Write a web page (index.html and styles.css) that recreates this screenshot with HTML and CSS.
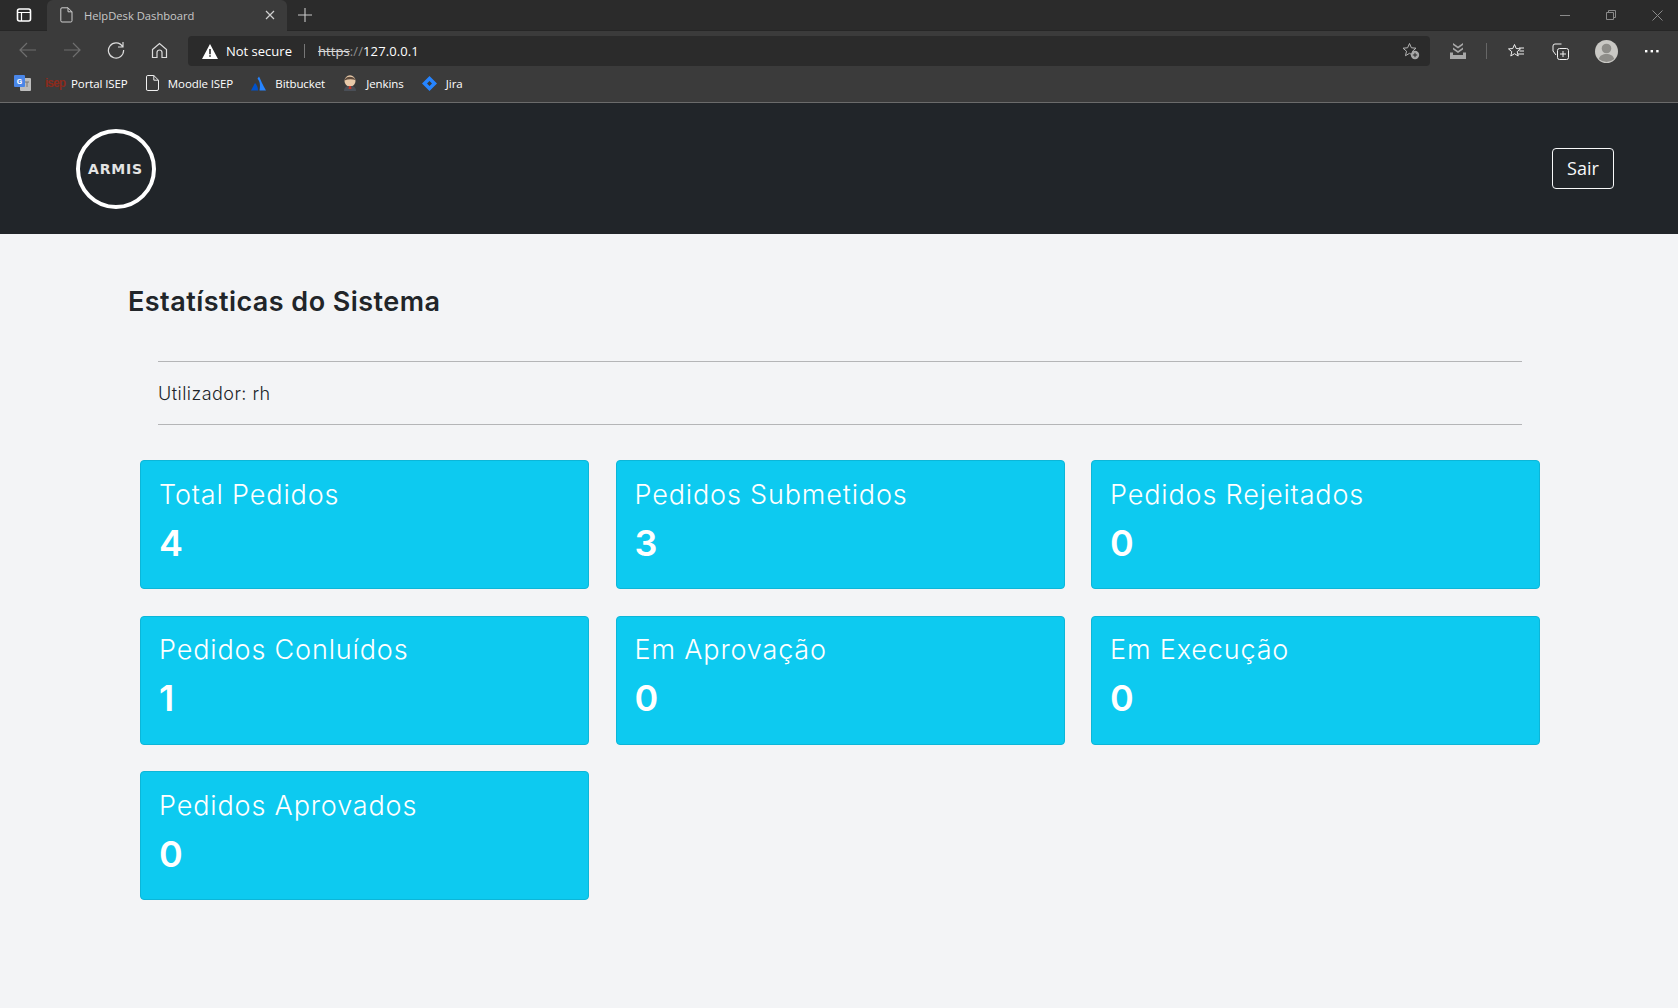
FILE: index.html
```html
<!DOCTYPE html>
<html lang="en">
<head>
    <meta charset="UTF-8">
    <title>HelpDesk Dashboard</title>
    <link rel="stylesheet" href="styles.css">
</head>
<body>
    <!-- Browser chrome -->
    <div class="browser">
        <div class="tabstrip">
            <div class="tab-menu">
                <svg width="16" height="16" viewBox="0 0 16 16" fill="none" stroke="#fff" stroke-width="1.6"><rect x="1.5" y="2" width="13" height="12" rx="2"/><path d="M5.5 5.5V14M1.5 5.5h13" stroke-width="1.2"/></svg>
            </div>
            <div class="tab">
                <svg width="14" height="16" viewBox="0 0 14 16" fill="none" stroke="#cfcfcf" stroke-width="1"><path d="M2 .8h6l4 4v9a1.2 1.2 0 0 1-1.2 1.2H2A1.2 1.2 0 0 1 .8 13.800V2A1.200 1.200 0 0 1 2 .8zM8 .8v4h4"/></svg>
                <span class="tab-title">HelpDesk Dashboard</span>
                <svg class="tab-close" width="10" height="10" viewBox="0 0 10 10" stroke="#d0d0d0" stroke-width="1.200"><path d="M1 1l8 8M9 1l-8 8"/></svg>
            </div>
            <svg class="new-tab" width="14" height="14" viewBox="0 0 14 14" stroke="#c8c8c8" stroke-width="1.100"><path d="M7 0v14M0 7h14"/></svg>
            <div class="window-controls">
                <svg width="10" height="10" viewBox="0 0 10 10" stroke="#8a8a8a"><path d="M0 5.500h10"/></svg>
                <svg width="10" height="10" viewBox="0 0 10 10" fill="none" stroke="#8a8a8a"><path d="M.5 2.500h7v7h-7zM2.500 2.500v-2h7v7h-2"/></svg>
                <svg width="11" height="11" viewBox="0 0 11 11" stroke="#8a8a8a"><path d="M.5.5l10 10M10.500.5l-10 10"/></svg>
            </div>
        </div>

        <div class="toolbar">
            <div class="nav-buttons">
                <svg width="18" height="16" viewBox="0 0 18 16" fill="none" stroke="#6f6f6f" stroke-width="1.200"><path d="M17 8H1M8 1L1 8l7 7"/></svg>
                <svg width="18" height="16" viewBox="0 0 18 16" fill="none" stroke="#6f6f6f" stroke-width="1.200"><path d="M1 8h16M10 1l7 7-7 7"/></svg>
                <svg width="18" height="18" viewBox="0 0 18 18" fill="none" stroke="#dcdcdc" stroke-width="1.200"><path d="M15.500 5.500A7.600 7.600 0 1 0 16.600 9M16 1v5h-5"/></svg>
                <svg width="17" height="17" viewBox="0 0 17 17" fill="none" stroke="#dcdcdc" stroke-width="1.200"><path d="M1.500 7.500L8.500 1.500l7 6V15.500h-4.500V10.500a2.500 2.500 0 0 0-5 0V15.500H1.500z"/></svg>
            </div>
            <div class="address">
                <svg width="16" height="15" viewBox="0 0 16 15"><path d="M8 0l8 15H0z" fill="#fff"/><path d="M7.200 5h1.600v5.200H7.200zM7.200 11.200h1.600v1.600H7.200z" fill="#2b2b2b"/></svg>
                <span class="not-secure">Not secure</span>
                <span class="addr-sep"></span>
                <span class="url"><s>https</s><i>://</i>127.0.0.1</span>
                <svg class="addr-star" width="18" height="18" viewBox="0 0 18 18"><path d="M7.500 1.500l1.900 4.300 4.600.4-3.500 3 1 4.500-4-2.400-4 2.400 1-4.500-3.500-3 4.600-.4z" fill="none" stroke="#b5b5b5"/><circle cx="13" cy="13" r="4.200" fill="#a8a8a8"/><path d="M13 10.800v4.400M10.800 13h4.400" stroke="#2b2b2b"/></svg>
            </div>
            <div class="tool-buttons">
                <svg class="tool-dl" width="16" height="16" viewBox="0 0 16 16" fill="#a8a8a8"><path d="M3 0l5 3.500L13 0v2L8 5.500 3 2zM3 4.500L8 8l5-3.500v2L8 10 3 6.500zM0 9.500h3V12h10V9.500h3V16H0z"/></svg>
                <span class="tool-sep"></span>
                <svg class="tool-fav" width="17" height="17" viewBox="0 0 17 17" fill="none" stroke="#f0f0f0"><path d="M6.500 1.500l1.700 4 4.300.4-3.300 2.800 1 4.300-3.700-2.300-3.700 2.300 1-4.300L.5 5.900l4.300-.4zM11 5h5M11.500 8h4.500M10 11h6"/></svg>
                <svg class="tool-col" width="17" height="17" viewBox="0 0 17 17" fill="none" stroke="#f0f0f0"><path d="M9.500 1H3a2 2 0 0 0-2 2v5l3 4"/><rect x="5.500" y="5.500" width="11" height="11" rx="2"/><path d="M11 8v6M8 11h6"/></svg>
                <svg class="tool-avatar" width="23" height="23" viewBox="0 0 23 23"><circle cx="11.500" cy="11.500" r="11.500" fill="#c9c8c4"/><circle cx="11.500" cy="8.500" r="4.800" fill="#8e8d89"/><path d="M3.800 19c1-3.600 4-5 7.700-5s6.700 1.400 7.700 5a11.500 11.500 0 0 1-15.400 0z" fill="#8e8d89"/></svg>
                <svg class="tool-more" width="14" height="4" viewBox="0 0 14 4" fill="#fff"><rect y="1" width="2.400" height="2.400"/><rect x="5.600" y="1" width="2.400" height="2.400"/><rect x="11.200" y="1" width="2.400" height="2.400"/></svg>
            </div>
        </div>

        <div class="bookmarks">
            <svg class="translate-icon" width="17" height="16" viewBox="0 0 17 16"><rect x="6" y="3" width="11" height="13" rx="1" fill="#bdbdbd"/><path d="M11 7h4M13 7v5" stroke="#777" stroke-width="1"/><rect width="11" height="12" rx="1" fill="#4a86e8"/><text x="5.500" y="9" font-size="8" font-weight="700" fill="#fff" text-anchor="middle" font-family="Roboto, sans-serif">G</text></svg>
            <div class="bookmark"><span class="isep">isep</span><span>Portal ISEP</span></div>
            <div class="bookmark">
                <svg width="13" height="16" viewBox="0 0 13 16" fill="none" stroke="#f0f0f0"><path d="M1.800.5h6l4.700 4.700V14a1.500 1.500 0 0 1-1.500 1.500H1.800A1.300 1.300 0 0 1 .5 14V1.800A1.300 1.300 0 0 1 1.800.5zM7.800.5v4.700h4.700"/></svg>
                <span>Moodle ISEP</span>
            </div>
            <div class="bookmark">
                <svg width="15" height="15" viewBox="0 0 15 15"><path d="M8 .5c1.500 3 3.500 8 7 14H8.500C9.500 10 9 5 6.500 2.800z" fill="#2684ff"/><path d="M4 7L0 14.500h7C7 11.500 6 9 4 7z" fill="#0052cc"/></svg>
                <span>Bitbucket</span>
            </div>
            <div class="bookmark">
                <svg width="14" height="16" viewBox="0 0 14 16"><ellipse cx="7" cy="6" rx="5.500" ry="5.800" fill="#e8c9a8"/><path d="M1.500 5.500C2 .5 11 .5 12.500 5 9 3.800 5 3.800 1.500 5.500z" fill="#5d4a3c"/><path d="M1 16c0-3.500 2-5 6-5s6 1.500 6 5z" fill="#4a4f57"/><path d="M6 11h2l.5 3h-3z" fill="#c0392b"/></svg>
                <span>Jenkins</span>
            </div>
            <div class="bookmark">
                <svg width="15" height="15" viewBox="0 0 15 15"><path d="M7.500 0L15 7.500 7.500 15 0 7.500zM7.500 5L5 7.500 7.500 10 10 7.500z" fill="#2684ff" fill-rule="evenodd"/></svg>
                <span>Jira</span>
            </div>
        </div>
    </div>

    <!-- Page header -->
    <header class="navbar">
        <div class="logo"><span>ARMIS</span></div>
        <button class="logout-button">Sair</button>
    </header>

    <main class="content">
        <h2 class="page-title">Estatísticas do Sistema</h2>

        <div class="user-info">Utilizador: rh</div>

        <div class="stats-grid">
            <div class="stat-card"><h3>Total Pedidos</h3><p>4</p></div>
            <div class="stat-card"><h3>Pedidos Submetidos</h3><p>3</p></div>
            <div class="stat-card"><h3>Pedidos Rejeitados</h3><p>0</p></div>
            <div class="stat-card"><h3>Pedidos Conluídos</h3><p>1</p></div>
            <div class="stat-card"><h3>Em Aprovação</h3><p>0</p></div>
            <div class="stat-card"><h3>Em Execução</h3><p>0</p></div>
            <div class="stat-card"><h3>Pedidos Aprovados</h3><p>0</p></div>
        </div>
    </main>
</body>
</html>
```

FILE: styles.css
```css
body {
    margin: 0;
    height: 1008px;
    overflow: hidden;
    background-color: #f3f4f6;
    font-family: Inter, "Open Sans", sans-serif;
}

svg {
    display: block;
    flex: none;
}

/* Browser chrome */
.browser {
    height: 103px;
    background-color: #3b3b3b;
    color: #fff;
    font-family: "Open Sans", sans-serif;
}

.tabstrip {
    height: 31px;
    display: flex;
    align-items: center;
    background-color: #2b2b2b;
    border-bottom: 1px solid #262626;
    box-sizing: border-box;
}

.tab-menu {
    width: 47px;
    display: flex;
    justify-content: center;
}

.tab {
    width: 240px;
    height: 31px;
    box-sizing: border-box;
    padding: 0 12px 0 13px;
    display: flex;
    align-items: center;
    background-color: #3b3b3b;
    border-radius: 6px 6px 0 0;
}

.tab-title {
    margin-left: 10px;
    flex: 1;
    font-size: 11.2px;
    color: #c8c8c8;
}

.new-tab {
    margin-left: 11px;
}

.window-controls {
    margin-left: auto;
    padding-right: 15px;
    display: flex;
    align-items: center;
    gap: 36px;
}

.toolbar {
    height: 35px;
    display: flex;
    align-items: center;
}

.nav-buttons {
    width: 188px;
    margin-top: 3px;
    padding-left: 19px;
    box-sizing: border-box;
    display: flex;
    align-items: center;
    gap: 26px;
}

.address {
    width: 1242px;
    height: 30px;
    margin-top: 5px;
    box-sizing: border-box;
    padding: 0 10px 0 14px;
    display: flex;
    align-items: center;
    background-color: #2b2b2b;
    border-radius: 4px;
    font-size: 13px;
}

.not-secure {
    margin-left: 8px;
}

.addr-sep {
    width: 1px;
    height: 14px;
    margin: 0 13px 0 12px;
    background-color: #777;
}

.url {
    letter-spacing: 0.1px;
}

.url s {
    color: #d8d8d8;
}

.url i {
    font-style: normal;
    color: #8f8f8f;
}

.addr-star {
    margin-left: auto;
}

.tool-buttons {
    flex: 1;
    margin-top: 5px;
    display: flex;
    align-items: center;
}

.tool-dl {
    margin-left: 20px;
}

.tool-sep {
    width: 1px;
    height: 16px;
    margin-left: 20px;
    background-color: #666;
}

.tool-fav {
    margin-left: 21px;
}

.tool-col {
    margin-left: 27px;
}

.tool-avatar {
    margin-left: 26px;
}

.tool-more {
    margin-left: 27px;
}

.bookmarks {
    height: 37px;
    box-sizing: border-box;
    padding: 0 0 2px 14px;
    display: flex;
    align-items: center;
    gap: 14.2px;
    border-bottom: 1px solid #6b6b6b;
    font-size: 11.5px;
    letter-spacing: -0.1px;
}

.translate-icon {
    margin-right: -4.2px;
}

.bookmark {
    margin-left: 4px;
    display: flex;
    align-items: center;
    gap: 9px;
}

.isep {
    margin-right: -3px;
    color: #8c2a1c;
    font-family: "Liberation Sans", sans-serif;
    font-weight: 700;
    font-size: 12px;
    letter-spacing: -1px;
}

/* Page header */
.navbar {
    height: 131px;
    padding: 0 64px 0 75.5px;
    display: flex;
    align-items: center;
    justify-content: space-between;
    background-color: #212529;
}

.logo {
    width: 80px;
    height: 80px;
    box-sizing: border-box;
    margin-top: 1px;
    border: 4px solid #fff;
    border-radius: 50%;
    display: flex;
    align-items: center;
    justify-content: center;
    color: #e4e4e4;
    font-family: "DejaVu Sans", sans-serif;
    font-weight: 700;
    font-size: 14px;
    letter-spacing: 0.8px;
}

.logout-button {
    width: 62px;
    height: 41px;
    padding: 0 0 2px;
    background: none;
    border: 1px solid #f8f9fa;
    border-radius: 4px;
    color: #f8f9fa;
    font-family: "Open Sans", sans-serif;
    font-size: 18px;
}

/* Main content */
.content {
    padding: 50px 138px 0 128px;
}

.page-title {
    margin: 0;
    font-size: 27px;
    line-height: 36px;
    font-weight: 600;
    letter-spacing: 0.45px;
    color: #212529;
}

.user-info {
    margin: 41px 18px 0 30px;
    padding: 19px 0 18px;
    border-top: 1px solid #b4b5b7;
    border-bottom: 1px solid #b4b5b7;
    font-size: 18px;
    line-height: 25px;
    font-weight: 300;
    letter-spacing: 0.45px;
    color: #212529;
}

.stats-grid {
    margin: 35px 0 0 12px;
    display: grid;
    grid-template-columns: repeat(3, 449px);
    grid-auto-rows: 129px;
    gap: 26.5px;
}

.stat-card {
    box-sizing: border-box;
    padding: 16.6px 18px;
    background-color: #0dcaf0;
    border: 1px solid #0cb6d8;
    border-radius: 4px;
    color: #fff;
}

.stat-card h3 {
    margin: 0;
    font-size: 27px;
    line-height: 34px;
    font-weight: 300;
    letter-spacing: 0.85px;
}

.stat-card p {
    margin: 9.4px 0 0;
    font-size: 36px;
    line-height: 44px;
    font-weight: 600;
}
```
